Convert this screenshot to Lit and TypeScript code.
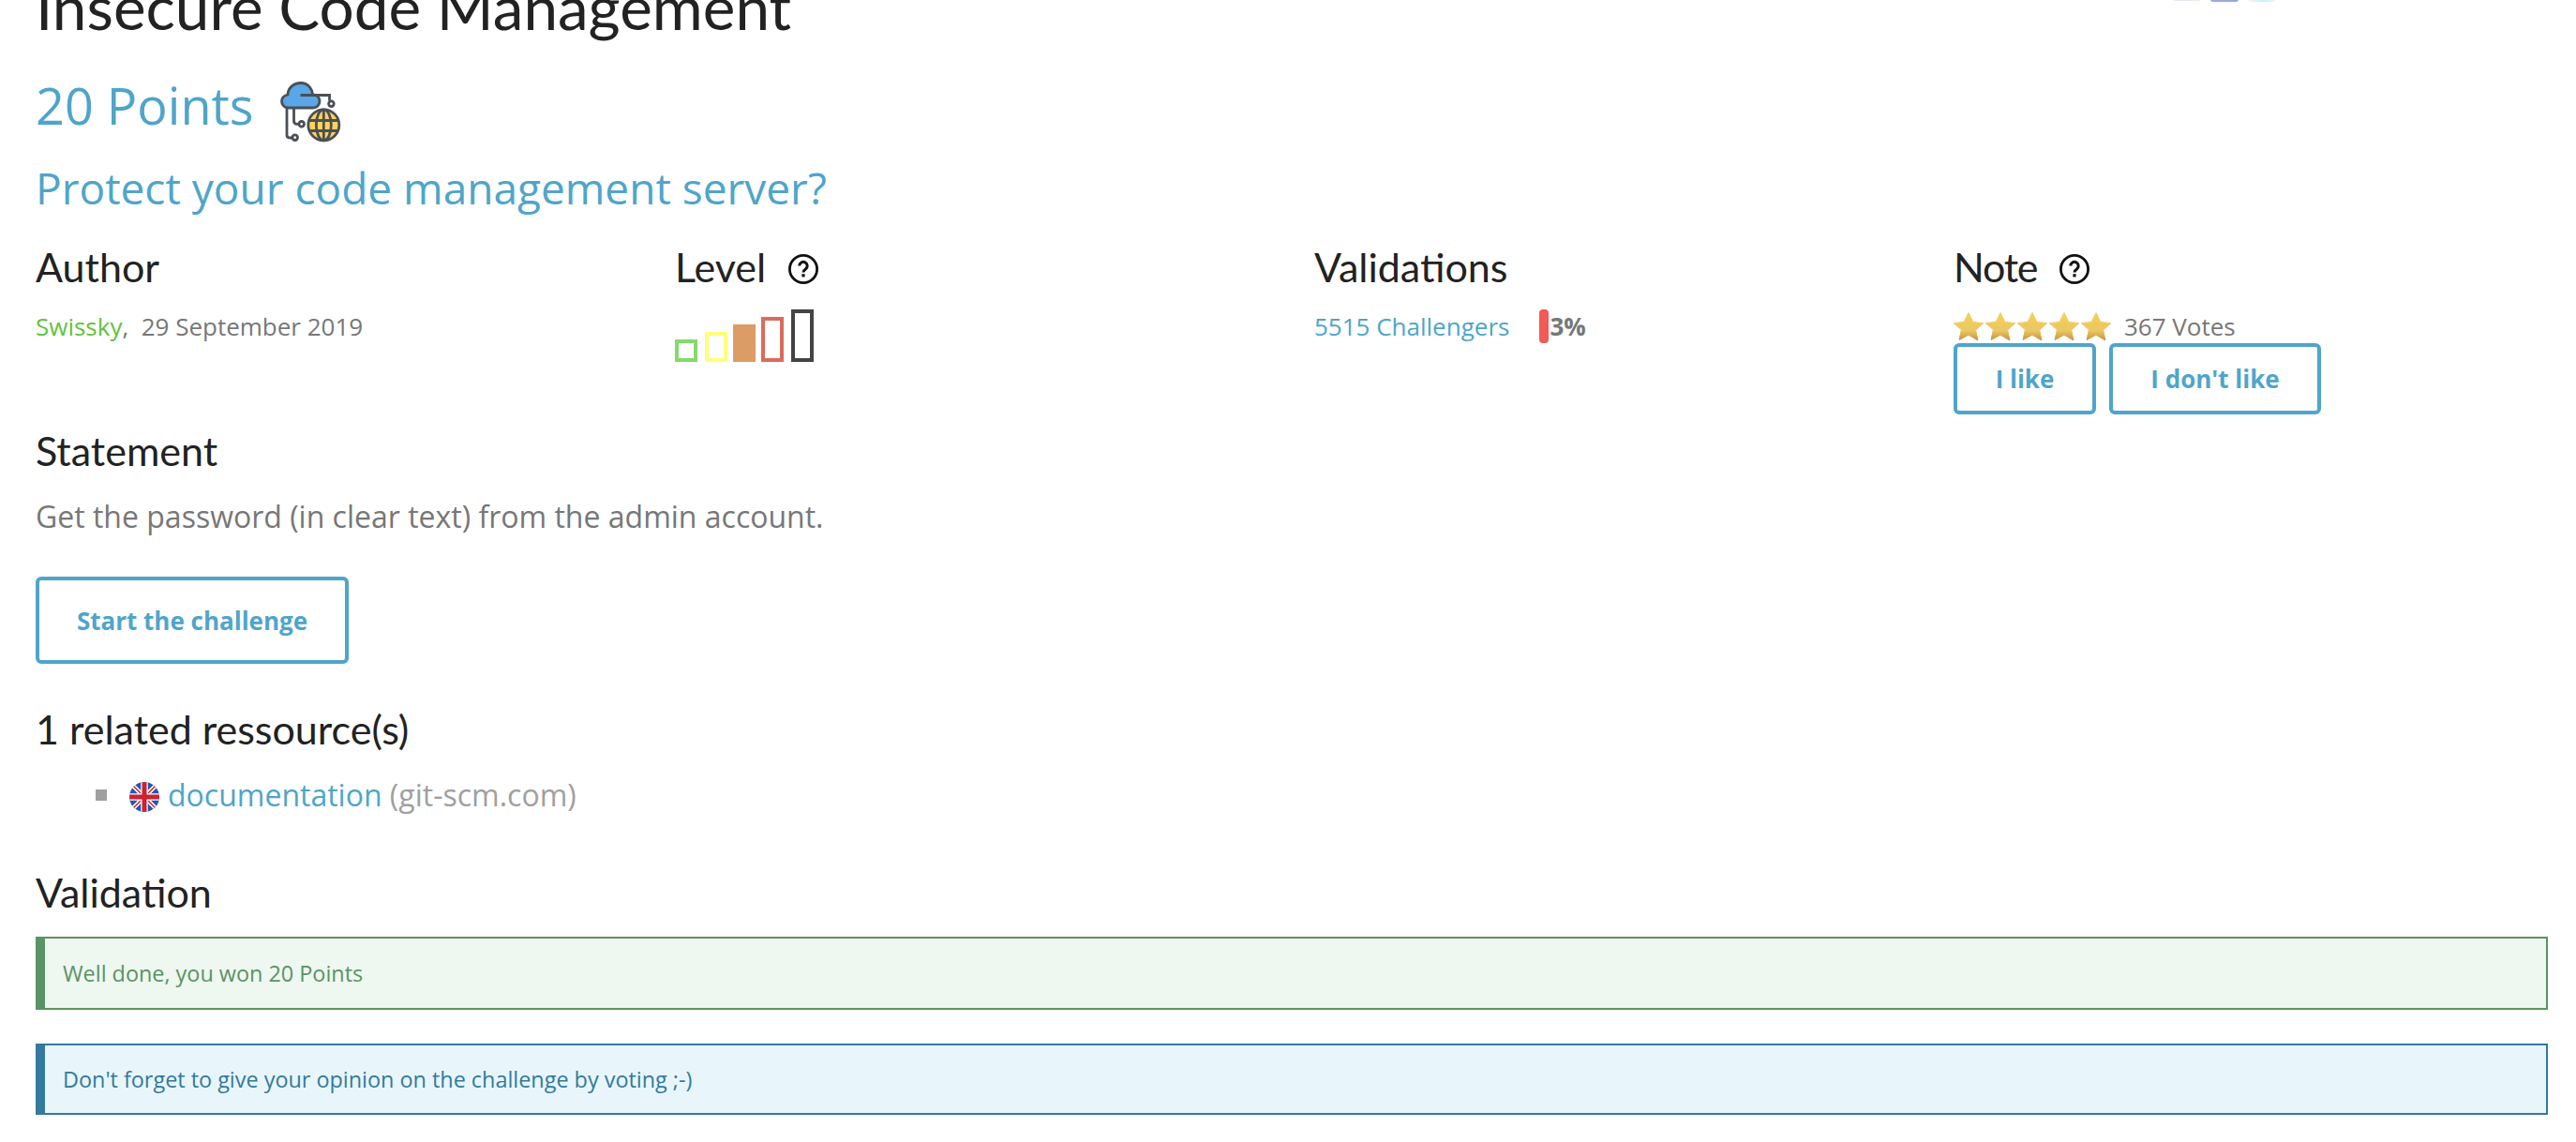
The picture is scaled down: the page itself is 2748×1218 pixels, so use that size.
import { LitElement, html, css, svg } from "lit";
import { customElement } from "lit/decorators.js";

const star = (i: number) => svg`<svg class="star" viewBox="0 0 34 30"><path d="M17 .5l4.8 9.9 11 1.3-8.1 7.4 2.2 10.9L17 24.2 7.1 29.5l2.2-10.9L1.2 11.7l11-1.3z" fill="url(#sg${i})" stroke="url(#sg${i})" stroke-width="1" stroke-linejoin="round"/><defs><linearGradient id="sg${i}" x1="0" y1="0" x2="0" y2="1"><stop offset="0" stop-color="#F6CF55"/><stop offset=".65" stop-color="#EBC764"/><stop offset="1" stop-color="#C8913C"/></linearGradient></defs></svg>`;

const help = html`<svg class="help" viewBox="0 0 32 32"><circle cx="16" cy="16" r="14.6" fill="none" stroke="#111" stroke-width="2.8"/><path d="M11.8 12.6a4.2 4.2 0 1 1 6.6 3.4c-1.5 1.1-2.4 1.8-2.4 3.4" fill="none" stroke="#111" stroke-width="3"/><rect x="14.4" y="21.2" width="3.2" height="3.2" fill="#111"/></svg>`;

const bars = [
  { w: 24, h: 24, c: "#86D96C", m: 0, f: false },
  { w: 24, h: 32, c: "#FFFF7A", m: 8, f: false },
  { w: 24, h: 40, c: "#DC9C66", m: 6, f: true },
  { w: 24, h: 48, c: "#D96C5C", m: 6, f: false },
  { w: 24, h: 56, c: "#444444", m: 8, f: false },
];

@customElement("app-root")
export class AppRoot extends LitElement {
  static styles = css`
    :host { display: block; background: #fff; font-family: "Open Sans", "Noto Sans", sans-serif; color: #777; height: 1218px; overflow: hidden; }
    .page { padding: 0 30px 0 38px; }
    .head { display: flex; justify-content: space-between; align-items: flex-start; height: 63px; margin-top: -33px; }
    h1, h2, h3 { font-family: Lato, "Open Sans", sans-serif; font-weight: 400; color: #222; margin: 0; }
    h1 { font-size: 65.6px; line-height: 80px; white-space: nowrap; }
    .logos { display: flex; gap: 10px; margin-right: 290px; height: 35px; }
    .logos i { display: block; width: 30px; height: 35px; border-radius: 3px; filter: blur(.6px); }
    .l1 { background: #E8E8F6; height: 34px !important; }
    .l2 { background: #9AA8D8; }
    .l3 { background: linear-gradient(90deg, #f4f4f4, #C8F0FA 50%, #f4f4f4); }
    .points { display: flex; align-items: flex-start; height: 93px; margin-top: 47px; font-size: 54px; line-height: 70px; color: #4FA5C9; }
    .points svg { width: 66px; height: 68px; margin-left: 29px; margin-top: 10px; }
    .sub { font-size: 46px; line-height: 60px; color: #4FA5C9; }
    .cols { display: grid; grid-template-columns: repeat(4, 682px); margin-top: 30px; height: 196px; }
    h3 { font-size: 43px; line-height: 50px; display: flex; align-items: center; }
    .tight { letter-spacing: -1.2px; }
    .help { width: 32px; height: 32px; margin-left: 24px; margin-top: 4px; }
    .meta { font-size: 26px; line-height: 36px; margin-top: 20px; white-space: pre; display: flex; align-items: center; }
    .green { color: #63C23E; }
    a { color: #4FA5C9; text-decoration: none; }
    .bars { display: flex; align-items: flex-end; height: 56px; margin-top: 20px; }
    .bars i { display: block; box-sizing: border-box; border-style: solid; border-width: 4px; }
    .rate { display: inline-block; width: 10px; height: 36px; border-radius: 4px; background: #F05A57; margin-left: 32px; margin-right: 1px; }
    .stars { display: flex; margin-left: -1px; height: 30px; margin-right: 13px; }
    .star { width: 34px; height: 30px; display: block; }
    .btns { display: flex; gap: 14px; }
    .btn { box-sizing: border-box; display: flex; align-items: center; justify-content: center; border: 4px solid #4FA5C9; border-radius: 6px; color: #4FA5C9; font-weight: 700; font-size: 26px; height: 76px; background: #fff; }
    .b1 { width: 152px; } .b2 { width: 226px; }
    .b3 { width: 334px; height: 93px; margin-top: 42px; font-size: 26px; }
    .stmt { font-size: 32px; line-height: 44px; margin-top: 23px; }
    h2 { font-size: 43px; line-height: 50px; }
    .res { display: flex; align-items: center; margin-left: 64px; font-size: 32px; line-height: 44px; color: #A0A0A0; margin-top: 23px; height: 44px; }
    .bul { width: 12px; height: 12px; background: #A0A0A0; margin-right: 24px; }
    .flag { width: 32px; height: 32px; margin-right: 9px; margin-top: 4px; }
    .res span { white-space: pre; }
    .box { box-sizing: border-box; border: 2px solid; border-left-width: 10px; padding-left: 19px; display: flex; align-items: center; font-size: 23.4px; }
    .ok { border-color: #5A9364; background: #EEF7F0; color: #5A9364; height: 78px; margin-top: 22px; }
    .info { border-color: #337A9C; background: #E8F6FC; color: #337A9C; height: 76px; margin-top: 36px; }
    .rel { margin-top: 45px; }
    .val { margin-top: 57px; }
  `;

  render() {
    return html`<div class="page">
      <div class="head">
        <h1>Insecure Code Management</h1>
        <div class="logos"><i class="l1"></i><i class="l2"></i><i class="l3"></i></div>
      </div>
      <div class="points">20 Points
        <svg viewBox="28 18 66 68">
          <g fill="none" stroke="#4A4F57" stroke-width="2.8">
            <path d="M35 46V75q0 3 3 3h3M42.5 46V60q0 3.3 3.5 3.3h2"/>
            <circle cx="43.7" cy="77.7" r="2.8"/><circle cx="50.7" cy="63.3" r="2.8"/><circle cx="82.4" cy="41.7" r="2.8"/>
            <path d="M37 46C31 46 29.5 41 29.5 39 29.5 35 32 33 36 32 36 25 42 19.5 50 19.5 57 19.5 62 25 62.5 32 67 32 70 35 70 39 70 43 67 46 63 46Z" fill="#5BA6E6"/>
            <path d="M49.5 32.5H80.5V38.5"/>
            <circle cx="74.3" cy="64.3" r="16.5" fill="#FFD25A"/>
            <ellipse cx="74.3" cy="64.3" rx="8" ry="16.5"/>
            <path d="M74.3 48V81M59 59.5H90M59 70.5H90"/>
          </g>
        </svg>
      </div>
      <div class="sub">Protect your code management server?</div>
      <div class="cols">
        <div>
          <h3>Author</h3>
          <div class="meta"><a class="green">Swissky</a>,  29 September 2019</div>
        </div>
        <div>
          <h3>Level ${help}</h3>
          <div class="bars">${bars.map(
            (b) => html`<i style="width:${b.w}px;height:${b.h}px;border-color:${b.c};margin-left:${b.m}px;background:${b.f ? b.c : "transparent"}"></i>`
          )}</div>
        </div>
        <div>
          <h3>Validations</h3>
          <div class="meta"><a>5515 Challengers</a><span class="rate"></span><b>3%</b></div>
        </div>
        <div>
          <h3 class="tight">Note ${help}</h3>
          <div class="meta"><span class="stars">${[0, 1, 2, 3, 4].map(star)}</span>367 Votes</div>
          <div class="btns"><div class="btn b1">I like</div><div class="btn b2">I don't like</div></div>
        </div>
      </div>
      <h2>Statement</h2>
      <div class="stmt">Get the password (in clear text) from the admin account.</div>
      <div class="btn b3">Start the challenge</div>
      <h2 class="rel">1 related ressource(s)</h2>
      <div class="res"><i class="bul"></i>
        <svg class="flag" viewBox="0 0 32 32">
          <defs><clipPath id="fc"><circle cx="16" cy="16" r="16"/></clipPath></defs>
          <g clip-path="url(#fc)">
            <rect width="32" height="32" fill="#2456B0"/>
            <path d="M0 0L32 32M32 0L0 32" stroke="#fff" stroke-width="4.5"/>
            <path d="M0 0L32 32M32 0L0 32" stroke="#CC2233" stroke-width="1.5"/>
            <path d="M16 0V32M0 16H32" stroke="#fff" stroke-width="7.5"/>
            <path d="M16 0V32M0 16H32" stroke="#CC2233" stroke-width="5"/>
          </g>
        </svg>
        <a>documentation</a><span> (git-scm.com)</span>
      </div>
      <h2 class="val">Validation</h2>
      <div class="box ok">Well done, you won 20 Points</div>
      <div class="box info">Don't forget to give your opinion on the challenge by voting ;-)</div>
    </div>`;
  }
}
